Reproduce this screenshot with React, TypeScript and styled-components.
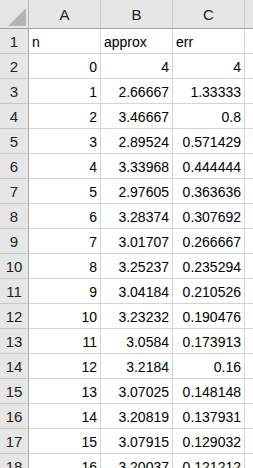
import React from "react";
import styled, { createGlobalStyle } from "styled-components";

const Global = createGlobalStyle`
  html, body { margin: 0; padding: 0; background: #fff; overflow: hidden; }
  body { font-family: "Liberation Sans", Arial, sans-serif; }
`;

const Sheet = styled.div`
  display: grid;
  grid-template-columns: 29px 72px 72px 72px 72px;
  grid-auto-rows: 25px;
  grid-template-rows: 29px;
  width: 253px;
  height: 468px;
  overflow: hidden;
  font-size: 14px;
  color: #000;
`;

const Corner = styled.div`
  position: relative;
  background: #e6e6e6;
  border-right: 1px solid #b4b4b4;
  border-bottom: 1px solid #9e9e9e;
  box-sizing: border-box;
`;

const Triangle = styled.svg`
  position: absolute;
  left: 8px;
  top: 8px;
`;

const ColHead = styled.div`
  background: #e6e6e6;
  border-right: 1px solid #c8c8c8;
  border-bottom: 1px solid #9e9e9e;
  box-sizing: border-box;
  display: flex;
  align-items: center;
  justify-content: center;
  font-size: 15px;
  color: #222;
  padding-top: 1px;
`;

const RowHead = styled.div`
  background: #e6e6e6;
  border-right: 1px solid #ababab;
  border-bottom: 1px solid #c8c8c8;
  box-sizing: border-box;
  display: flex;
  align-items: center;
  justify-content: center;
  font-size: 15px;
  color: #222;
  padding-top: 1px;
`;

const Cell = styled.div<{ $num?: boolean }>`
  border-right: 1px solid #d4d4d4;
  border-bottom: 1px solid #d4d4d4;
  box-sizing: border-box;
  display: flex;
  align-items: center;
  justify-content: ${(p) => (p.$num ? "flex-end" : "flex-start")};
  padding: 1px 3px 0 3px;
  white-space: nowrap;
  overflow: hidden;
`;

const rows: (string | number)[][] = [
  ["n", "approx", "err"],
  [0, 4, 4],
  [1, "2.66667", "1.33333"],
  [2, "3.46667", "0.8"],
  [3, "2.89524", "0.571429"],
  [4, "3.33968", "0.444444"],
  [5, "2.97605", "0.363636"],
  [6, "3.28374", "0.307692"],
  [7, "3.01707", "0.266667"],
  [8, "3.25237", "0.235294"],
  [9, "3.04184", "0.210526"],
  [10, "3.23232", "0.190476"],
  [11, "3.0584", "0.173913"],
  [12, "3.2184", "0.16"],
  [13, "3.07025", "0.148148"],
  [14, "3.20819", "0.137931"],
  [15, "3.07915", "0.129032"],
  [16, "3.20037", "0.121212"],
];

export default function App() {
  return (
    <>
      <Global />
      <Sheet>
        <Corner>
          <Triangle width="18" height="18" viewBox="0 0 18 18">
            <polygon points="18,0 18,18 0,18" fill="#b4b4b4" />
          </Triangle>
        </Corner>
        {["A", "B", "C", ""].map((h, i) => (
          <ColHead key={i}>{h}</ColHead>
        ))}
        {rows.map((r, i) => (
          <React.Fragment key={i}>
            <RowHead>{i + 1}</RowHead>
            {r.map((v, j) => (
              <Cell key={j} $num={i > 0}>
                {v}
              </Cell>
            ))}
            <Cell />
          </React.Fragment>
        ))}
      </Sheet>
    </>
  );
}
